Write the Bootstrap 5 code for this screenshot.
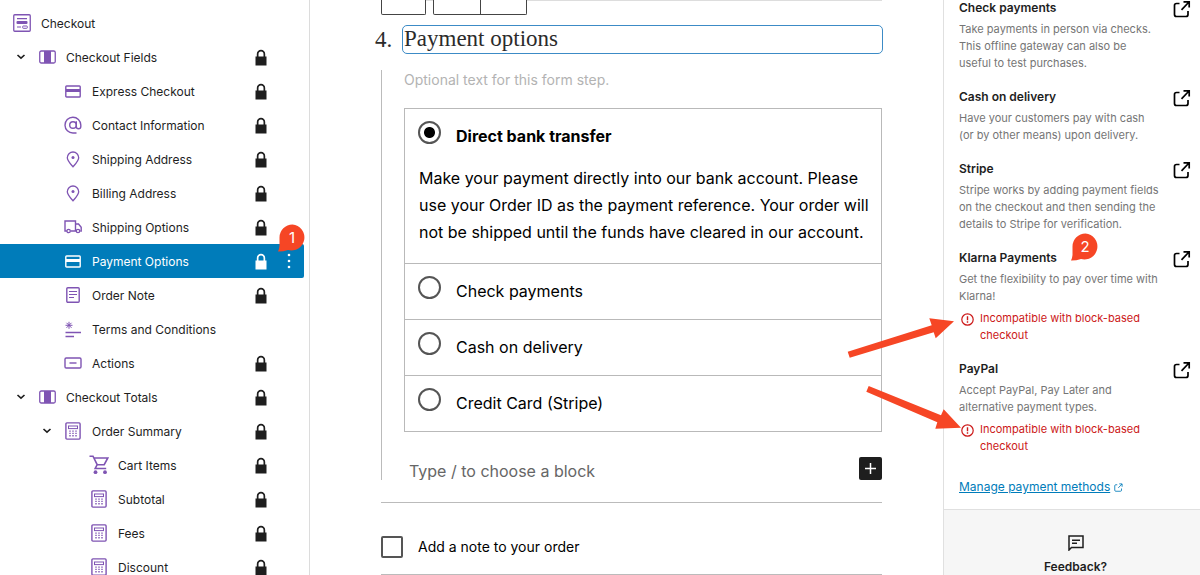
<!DOCTYPE html>
<html lang="en">
<head>
<meta charset="utf-8">
<meta name="viewport" content="width=device-width, initial-scale=1">
<title>Checkout – Payment options</title>
<link href="https://cdn.jsdelivr.net/npm/bootstrap@5.3.0/dist/css/bootstrap.min.css" rel="stylesheet">
<style>
  body { font-family: Inter, "Liberation Sans", sans-serif; color: #1e1e1e; background: #fff; }
  .editor { height: 100vh; }
  svg { display: block; }

  /* Block list */
  .block-tree { flex: 0 0 310px; border-right: 1px solid #dcdcdc; padding: 6px 5px 0 0; }
  .tree-row { height: 34px; font-size: 12px; color: #1e1e1e; border-radius: 0 2px 2px 0; }
  .tree-row.active { background: #007cba; color: #fff; }
  .tree-cell { flex: 0 0 26px; display: flex; justify-content: center; }
  .tree-icon { color: #7f54b3; }
  .active .tree-icon { color: #fff; }
  .level-0 { margin-left: -17px; }
  .level-1 { padding-left: 8px; }
  .level-2 { padding-left: 34px; }
  .level-3 { padding-left: 60px; }
  .tree-name { flex: 1 1 0; margin-left: 6px; padding-top: 1px; white-space: nowrap; }
  .tree-lock { flex: 0 0 24px; display: flex; justify-content: center; }
  .tree-more { flex: 0 0 31px; display: flex; justify-content: center; }

  /* Canvas */
  .canvas { flex: 1 1 0; padding: 0 61px 0 71px; color: #000; }
  .express-area { height: 14px; border-top: 1px solid #ddd; margin-bottom: 11px; }
  .express-slot { height: 15px; margin-top: -1px; border: 1px solid #444; border-top: 0; border-radius: 0 0 2px 2px; background: #fff; }
  .slot-one { width: 45px; margin-right: 7px; }
  .slot-two { width: 94px; }
  .slot-two div { width: 47px; border-right: 1px solid #444; }
  .step-heading { margin-left: -6px; font-family: "Source Serif Pro", "Liberation Serif", serif; font-size: 23px; color: #2b2b2b; }
  .step-number { flex: 0 0 27px; line-height: 29px; }
  .step-title { min-width: 0; height: 29px; padding: 0 1px; margin-right: -1px; border: 1px solid #3c8bc6; border-radius: 5px; color: inherit; outline: 0; }
  .step-body { margin-top: 16px; padding-left: 22px; border-left: 1px solid #bbb; }
  .bare-field { border: 0; padding: 0; outline: 0; background: transparent; color: #555; min-width: 0; }
  .step-hint { height: 18px; font-size: 14px; }
  .step-hint::placeholder { color: #b3b3b3; opacity: 1; }
  .pay-list { margin-top: 20px; border: 1px solid #b9b9b9; font-size: 16px; }
  .pay-option + .pay-option { border-top: 1px solid #b9b9b9; }
  .pay-head { height: 56px; padding: 0 13px; }
  .pay-option + .pay-option .pay-head { height: 55px; }
  .pay-radio { appearance: none; flex: 0 0 23px; height: 23px; margin: 12px 15px 0 0; border: 2px solid #555; border-radius: 50%; background: #fff; }
  .pay-radio:checked { background: radial-gradient(circle, #000 5px, #fff 6px); }
  .pay-label { line-height: 55px; }
  .pay-text { margin: 0; padding: 0 4px 17px 14px; line-height: 27px; }
  .block-prompt { padding: 25px 0 0 5px; }
  .prompt-field { height: 23px; padding-top: 4px; font-size: 16px; }
  .prompt-field::placeholder { color: #666; opacity: 1; }
  .add-block { width: 23px; height: 23px; padding: 0; border: 0; border-radius: 2px; background: #1e1e1e; color: #fff; }
  .note-row { margin-top: 22px; height: 73px; border-top: 1px solid #bbb; border-bottom: 1px solid #bbb; font-size: 14px; }
  .note-check { appearance: none; width: 22px; height: 22px; margin: 0 15px 0 0; border: 2px solid #555; border-radius: 2px; background: #fff; }

  /* Settings */
  .settings { flex: 0 0 257px; border-left: 1px solid #e0e0e0; background: #fff; }
  .gateways { padding: 0 9px 12px 15px; margin-top: -2px; height: 512px; }
  .gateway { margin-bottom: 15px; }
  .gateway-name { margin: 0 0 3px; font-size: 12px; line-height: 20px; font-weight: 600; }
  .gateway-desc { margin: 0; font-size: 11px; line-height: 17px; color: #757575; width: 200px; }
  .gateway-warn { margin: 5px 0 0; font-size: 11px; line-height: 17px; color: #cc1818; width: 190px; }
  .warn-icon { padding: 3px 6px 0 2px; }
  .gateway-link { color: #000; padding-top: 2px; }
  .manage-link { display: inline-flex; align-items: center; margin-top: 7px; font-size: 12px; line-height: 20px; color: #007cba; }
  .feedback { background: #f6f6f6; border-top: 1px solid #e0e0e0; padding: 25px 0 0 7px; font-size: 12px; font-weight: 600; line-height: 16px; }

  /* Annotations drawn over the editor */
  .arrows { right: 236px; top: 310px; }
  .callout-pin { width: 28px; height: 28px; font-size: 15px; line-height: 27px; color: #fff; text-align: center; }
  .callout-pin svg { position: absolute; left: 0; top: 0; z-index: -1; }
  .pin-row { right: -2px; top: -20px; z-index: 2; isolation: isolate; }
  .pin-gateway { left: 112px; top: -15px; isolation: isolate; }
</style>
</head>
<body>
<svg width="0" height="0" class="position-absolute" aria-hidden="true">
  <defs>
    <symbol id="i-chevron" viewBox="0 0 10 6"><path d="M1.500 1l3.500 3.200L8.500 1" fill="none" stroke="currentColor" stroke-width="1.600"/></symbol>
    <symbol id="i-lock" viewBox="0 0 12 17"><path d="M.5 7.500H1.800V5a4.200 4.200 0 0 1 8.400 0v2.500h1.300v9H.5zM3.500 7.500h5V5a2.500 2.500 0 0 0-5 0z" fill="currentColor" fill-rule="evenodd"/></symbol>
    <symbol id="i-form" viewBox="0 0 18 18"><rect x=".75" y=".75" width="16.500" height="16.500" rx="1" fill="none" stroke="currentColor" stroke-width="1.300"/><path d="M4 4.700h10M4 13h4" stroke="currentColor" stroke-width="1.200"/><rect x="3.500" y="7" width="11" height="3" rx="1" fill="currentColor"/><rect x="9.700" y="12" width="4.600" height="2.300" rx=".6" fill="none" stroke="currentColor"/></symbol>
    <symbol id="i-columns" viewBox="0 0 17 14"><rect x=".75" y="1" width="15.500" height="12" rx="1.500" fill="none" stroke="currentColor" stroke-width="1.300"/><path d="M5 1h7v12H5z" fill="currentColor"/></symbol>
    <symbol id="i-card" viewBox="0 0 16 13"><rect x=".8" y="1" width="14.400" height="11" rx=".8" fill="none" stroke="currentColor" stroke-width="1.400"/><path d="M1 4h14v3H1z" fill="currentColor"/></symbol>
    <symbol id="i-at" viewBox="0 0 18 18"><circle cx="9" cy="9" r="3.300" fill="none" stroke="currentColor" stroke-width="1.400"/><path d="M12.300 5.300V10.500a2.200 2.200 0 0 0 4.500 0V9A7.900 7.900 0 1 0 9 17h3.500" fill="none" stroke="currentColor" stroke-width="1.400"/></symbol>
    <symbol id="i-pin" viewBox="0 0 14 17"><path d="M7 15.800C4 12.300 1.300 9.500 1.300 6.700a5.700 5.700 0 0 1 11.400 0C12.700 9.500 10 12.300 7 15.800z" fill="none" stroke="currentColor" stroke-width="1.300"/><circle cx="7" cy="6.500" r="1.500" fill="currentColor"/></symbol>
    <symbol id="i-truck" viewBox="0 0 18 14"><path d="M2.800 11H1V1h10.500v10H6.500M11.500 4h3l2.700 3.200V11h-1M11.500 11h.700" fill="none" stroke="currentColor" stroke-width="1.400"/><circle cx="4.600" cy="11" r="1.700" fill="none" stroke="currentColor" stroke-width="1.300"/><circle cx="14" cy="11" r="1.700" fill="none" stroke="currentColor" stroke-width="1.300"/></symbol>
    <symbol id="i-note" viewBox="0 0 14 16"><rect x=".8" y=".8" width="12.400" height="14.400" rx="1" fill="none" stroke="currentColor" stroke-width="1.400"/><path d="M3 4.500h8M3 7.500h8M3 10.500h5" stroke="currentColor" stroke-width="1.200"/></symbol>
    <symbol id="i-terms" viewBox="0 0 16 17"><path d="M4 .8v7M.5 4.300h7M1.500 1.800l5 5M6.500 1.800l-5 5" stroke="currentColor" stroke-width="1"/><path d="M.5 11.500H16M.5 15.500H9" stroke="currentColor" stroke-width="1.300"/></symbol>
    <symbol id="i-button" viewBox="0 0 18 12"><rect x="1" y="1" width="16" height="10" rx="1.200" fill="none" stroke="currentColor" stroke-width="1.400"/><path d="M5.500 6h7" stroke="currentColor" stroke-width="1.400"/></symbol>
    <symbol id="i-calc" viewBox="0 0 16 18"><rect x=".9" y=".9" width="14.200" height="16.200" rx="1" fill="none" stroke="currentColor" stroke-width="1.400"/><rect x="3.500" y="4" width="9" height="2.600" fill="none" stroke="currentColor"/><path d="M5 8.500v6M8 8.500v6M11 8.500v6" stroke="currentColor" stroke-width="1.400" stroke-dasharray="1.300 1"/></symbol>
    <symbol id="i-cart" viewBox="0 0 20 20"><path d="M.5 1.200H4l4.200 8.500h7L18.800 3H5M8.200 9.700l-2 3.800h11" fill="none" stroke="currentColor" stroke-width="1.600"/><circle cx="6.500" cy="17.200" r="1.900" fill="currentColor"/><circle cx="16" cy="17.200" r="1.900" fill="currentColor"/></symbol>
    <symbol id="i-external" viewBox="0 0 18 18"><path d="M6.500 3.500H3.500a2 2 0 0 0-2 2V14.500a2 2 0 0 0 2 2H13a2 2 0 0 0 2-2V11M10.500 1.800h5.700v5.700M16 2L8.500 9.800" fill="none" stroke="currentColor" stroke-width="1.700"/></symbol>
    <symbol id="i-alert" viewBox="0 0 13 13"><circle cx="6.500" cy="6.500" r="5.700" fill="none" stroke="currentColor" stroke-width="1.200"/><path d="M6.500 3.200v4M6.500 8.300v1.500" stroke="currentColor" stroke-width="1.400"/></symbol>
    <symbol id="i-pinshape" viewBox="0 0 28 28"><path d="M14.500 0.500a13 13 0 1 1-4.500 25.500Q5 27.600 0 27.500 1.300 25 1.500 22V13.500a13 13 0 0 1 13-13z" fill="#f64625"/></symbol>
  </defs>
</svg>

<div class="editor d-flex position-relative overflow-hidden">

  <nav class="block-tree" aria-label="Block list">
    <ul class="list-unstyled m-0">
      <li><a href="#" class="tree-row level-0 d-flex align-items-center text-decoration-none"><span class="tree-cell"><svg width="10" height="6"><use href="#i-chevron"/></svg></span><span class="tree-cell tree-icon"><svg width="18" height="18"><use href="#i-form"/></svg></span><span class="tree-name">Checkout</span></a></li>
      <li><a href="#" class="tree-row level-1 d-flex align-items-center text-decoration-none"><span class="tree-cell"><svg width="10" height="6"><use href="#i-chevron"/></svg></span><span class="tree-cell tree-icon"><svg width="17" height="14"><use href="#i-columns"/></svg></span><span class="tree-name">Checkout Fields</span><span class="tree-lock"><svg width="12" height="17"><use href="#i-lock"/></svg></span><span class="tree-more"></span></a></li>
      <li><a href="#" class="tree-row level-2 d-flex align-items-center text-decoration-none"><span class="tree-cell"></span><span class="tree-cell tree-icon"><svg width="16" height="13"><use href="#i-card"/></svg></span><span class="tree-name">Express Checkout</span><span class="tree-lock"><svg width="12" height="17"><use href="#i-lock"/></svg></span><span class="tree-more"></span></a></li>
      <li><a href="#" class="tree-row level-2 d-flex align-items-center text-decoration-none"><span class="tree-cell"></span><span class="tree-cell tree-icon"><svg width="18" height="18"><use href="#i-at"/></svg></span><span class="tree-name">Contact Information</span><span class="tree-lock"><svg width="12" height="17"><use href="#i-lock"/></svg></span><span class="tree-more"></span></a></li>
      <li><a href="#" class="tree-row level-2 d-flex align-items-center text-decoration-none"><span class="tree-cell"></span><span class="tree-cell tree-icon"><svg width="14" height="17"><use href="#i-pin"/></svg></span><span class="tree-name">Shipping Address</span><span class="tree-lock"><svg width="12" height="17"><use href="#i-lock"/></svg></span><span class="tree-more"></span></a></li>
      <li><a href="#" class="tree-row level-2 d-flex align-items-center text-decoration-none"><span class="tree-cell"></span><span class="tree-cell tree-icon"><svg width="14" height="17"><use href="#i-pin"/></svg></span><span class="tree-name">Billing Address</span><span class="tree-lock"><svg width="12" height="17"><use href="#i-lock"/></svg></span><span class="tree-more"></span></a></li>
      <li><a href="#" class="tree-row level-2 d-flex align-items-center text-decoration-none"><span class="tree-cell"></span><span class="tree-cell tree-icon"><svg width="18" height="14"><use href="#i-truck"/></svg></span><span class="tree-name">Shipping Options</span><span class="tree-lock"><svg width="12" height="17"><use href="#i-lock"/></svg></span><span class="tree-more"></span></a></li>
      <li class="position-relative"><a href="#" class="tree-row active level-2 d-flex align-items-center text-decoration-none" aria-current="true"><span class="tree-cell"></span><span class="tree-cell tree-icon"><svg width="16" height="13"><use href="#i-card"/></svg></span><span class="tree-name">Payment Options</span><span class="tree-lock"><svg width="12" height="17"><use href="#i-lock"/></svg></span><span class="tree-more"><svg width="4" height="16" viewBox="0 0 4 16" fill="currentColor"><circle cx="2" cy="2" r="1.300"/><circle cx="2" cy="8" r="1.300"/><circle cx="2" cy="14" r="1.300"/></svg></span></a>
        <span class="callout-pin pin-row position-absolute"><svg width="28" height="28"><use href="#i-pinshape"/></svg>1</span></li>
      <li><a href="#" class="tree-row level-2 d-flex align-items-center text-decoration-none"><span class="tree-cell"></span><span class="tree-cell tree-icon"><svg width="14" height="16"><use href="#i-note"/></svg></span><span class="tree-name">Order Note</span><span class="tree-lock"><svg width="12" height="17"><use href="#i-lock"/></svg></span><span class="tree-more"></span></a></li>
      <li><a href="#" class="tree-row level-2 d-flex align-items-center text-decoration-none"><span class="tree-cell"></span><span class="tree-cell tree-icon"><svg width="16" height="17"><use href="#i-terms"/></svg></span><span class="tree-name">Terms and Conditions</span></a></li>
      <li><a href="#" class="tree-row level-2 d-flex align-items-center text-decoration-none"><span class="tree-cell"></span><span class="tree-cell tree-icon"><svg width="18" height="12"><use href="#i-button"/></svg></span><span class="tree-name">Actions</span><span class="tree-lock"><svg width="12" height="17"><use href="#i-lock"/></svg></span><span class="tree-more"></span></a></li>
      <li><a href="#" class="tree-row level-1 d-flex align-items-center text-decoration-none"><span class="tree-cell"><svg width="10" height="6"><use href="#i-chevron"/></svg></span><span class="tree-cell tree-icon"><svg width="17" height="14"><use href="#i-columns"/></svg></span><span class="tree-name">Checkout Totals</span><span class="tree-lock"><svg width="12" height="17"><use href="#i-lock"/></svg></span><span class="tree-more"></span></a></li>
      <li><a href="#" class="tree-row level-2 d-flex align-items-center text-decoration-none"><span class="tree-cell"><svg width="10" height="6"><use href="#i-chevron"/></svg></span><span class="tree-cell tree-icon"><svg width="16" height="18"><use href="#i-calc"/></svg></span><span class="tree-name">Order Summary</span><span class="tree-lock"><svg width="12" height="17"><use href="#i-lock"/></svg></span><span class="tree-more"></span></a></li>
      <li><a href="#" class="tree-row level-3 d-flex align-items-center text-decoration-none"><span class="tree-cell"></span><span class="tree-cell tree-icon"><svg width="20" height="20"><use href="#i-cart"/></svg></span><span class="tree-name">Cart Items</span><span class="tree-lock"><svg width="12" height="17"><use href="#i-lock"/></svg></span><span class="tree-more"></span></a></li>
      <li><a href="#" class="tree-row level-3 d-flex align-items-center text-decoration-none"><span class="tree-cell"></span><span class="tree-cell tree-icon"><svg width="16" height="18"><use href="#i-calc"/></svg></span><span class="tree-name">Subtotal</span><span class="tree-lock"><svg width="12" height="17"><use href="#i-lock"/></svg></span><span class="tree-more"></span></a></li>
      <li><a href="#" class="tree-row level-3 d-flex align-items-center text-decoration-none"><span class="tree-cell"></span><span class="tree-cell tree-icon"><svg width="16" height="18"><use href="#i-calc"/></svg></span><span class="tree-name">Fees</span><span class="tree-lock"><svg width="12" height="17"><use href="#i-lock"/></svg></span><span class="tree-more"></span></a></li>
      <li><a href="#" class="tree-row level-3 d-flex align-items-center text-decoration-none"><span class="tree-cell"></span><span class="tree-cell tree-icon"><svg width="16" height="18"><use href="#i-calc"/></svg></span><span class="tree-name">Discount</span><span class="tree-lock"><svg width="12" height="17"><use href="#i-lock"/></svg></span><span class="tree-more"></span></a></li>
    </ul>
  </nav>

  <main class="canvas">
    <div class="express-area d-flex">
      <div class="express-slot slot-one"></div>
      <div class="express-slot slot-two d-flex"><div></div></div>
    </div>

    <div class="step-heading d-flex">
      <label class="step-number" for="step-title">4.</label>
      <input id="step-title" class="step-title flex-fill" type="text" value="Payment options">
    </div>

    <section class="step-body">
      <input class="bare-field step-hint d-block w-100" type="text" placeholder="Optional text for this form step." aria-label="Step description">
      <div class="pay-list">
        <div class="pay-option">
          <div class="pay-head d-flex align-items-start"><input class="pay-radio" type="radio" name="pay" id="pay-bank" checked><label class="pay-label fw-bold" for="pay-bank">Direct bank transfer</label></div>
          <p class="pay-text">Make your payment directly into our bank account. Please use your Order ID as the payment reference. Your order will not be shipped until the funds have cleared in our account.</p>
        </div>
        <div class="pay-option"><div class="pay-head d-flex align-items-start"><input class="pay-radio" type="radio" name="pay" id="pay-check"><label class="pay-label" for="pay-check">Check payments</label></div></div>
        <div class="pay-option"><div class="pay-head d-flex align-items-start"><input class="pay-radio" type="radio" name="pay" id="pay-cash"><label class="pay-label" for="pay-cash">Cash on delivery</label></div></div>
        <div class="pay-option"><div class="pay-head d-flex align-items-start"><input class="pay-radio" type="radio" name="pay" id="pay-stripe"><label class="pay-label" for="pay-stripe">Credit Card (Stripe)</label></div></div>
      </div>
      <div class="block-prompt d-flex">
        <input class="bare-field prompt-field flex-fill" type="text" placeholder="Type / to choose a block" aria-label="Add block">
        <button type="button" class="add-block d-flex align-items-center justify-content-center" aria-label="Add block"><svg width="13" height="13" viewBox="0 0 13 13"><path d="M6.500 1v11M1 6.500h11" stroke="currentColor" stroke-width="1.500"/></svg></button>
      </div>
    </section>

    <div class="note-row d-flex align-items-center pt-3">
      <input class="note-check" type="checkbox" id="add-note"><label for="add-note">Add a note to your order</label>
    </div>
  </main>

  <aside class="settings d-flex flex-column">
    <div class="gateways">
      <div class="gateway d-flex justify-content-between align-items-start">
        <div><h2 class="gateway-name">Check payments</h2><p class="gateway-desc">Take payments in person via checks. This offline gateway can also be useful to test purchases.</p></div>
        <a href="#" class="gateway-link" aria-label="Open Check payments"><svg width="18" height="18"><use href="#i-external"/></svg></a>
      </div>
      <div class="gateway d-flex justify-content-between align-items-start">
        <div><h2 class="gateway-name">Cash on delivery</h2><p class="gateway-desc">Have your customers pay with cash (or by other means) upon delivery.</p></div>
        <a href="#" class="gateway-link" aria-label="Open Cash on delivery"><svg width="18" height="18"><use href="#i-external"/></svg></a>
      </div>
      <div class="gateway d-flex justify-content-between align-items-start">
        <div><h2 class="gateway-name">Stripe</h2><p class="gateway-desc">Stripe works by adding payment fields on the checkout and then sending the details to Stripe for verification.</p></div>
        <a href="#" class="gateway-link" aria-label="Open Stripe"><svg width="18" height="18"><use href="#i-external"/></svg></a>
      </div>
      <div class="gateway d-flex justify-content-between align-items-start position-relative">
        <div><h2 class="gateway-name">Klarna Payments</h2><p class="gateway-desc">Get the flexibility to pay over time with Klarna!</p>
          <p class="gateway-warn d-flex"><span class="flex-shrink-0 warn-icon"><svg width="13" height="13"><use href="#i-alert"/></svg></span><span>Incompatible with block-based checkout</span></p></div>
        <a href="#" class="gateway-link" aria-label="Open Klarna Payments"><svg width="18" height="18"><use href="#i-external"/></svg></a>
        <span class="callout-pin pin-gateway position-absolute"><svg width="28" height="28"><use href="#i-pinshape"/></svg>2</span>
      </div>
      <div class="gateway d-flex justify-content-between align-items-start">
        <div><h2 class="gateway-name">PayPal</h2><p class="gateway-desc">Accept PayPal, Pay Later and alternative payment types.</p>
          <p class="gateway-warn d-flex"><span class="flex-shrink-0 warn-icon"><svg width="13" height="13"><use href="#i-alert"/></svg></span><span>Incompatible with block-based checkout</span></p></div>
        <a href="#" class="gateway-link" aria-label="Open PayPal"><svg width="18" height="18"><use href="#i-external"/></svg></a>
      </div>
      <a href="#" class="manage-link">Manage payment methods<svg class="ms-1" width="9" height="9"><use href="#i-external"/></svg></a>
    </div>
    <div class="feedback flex-fill d-flex flex-column align-items-center">
      <svg width="16" height="16" viewBox="0 0 16 16"><path d="M1 15V1h14v11.500H3.500z" fill="none" stroke="currentColor" stroke-width="1.500"/><path d="M4 5.300h8M4 8.300h5" stroke="currentColor" stroke-width="1.400"/></svg>
      <span class="mt-2">Feedback?</span>
    </div>
  </aside>

  <svg class="arrows position-absolute" width="124" height="124" viewBox="840 310 124 124" fill="#f64625" aria-hidden="true">
    <path d="M847.700 351.700L931.700 325.300 929.300 318.300 954 321.300 935.700 338.300 933.700 332.300 849.700 357.700z"/>
    <path d="M868.700 386L941 415.300 943.700 409.300 961 427.700 935.300 428.700 937.300 422.300 866.300 391.700z"/>
  </svg>
</div>
<script src="https://cdn.jsdelivr.net/npm/bootstrap@5.3.0/dist/js/bootstrap.bundle.min.js"></script>
</body>
</html>
